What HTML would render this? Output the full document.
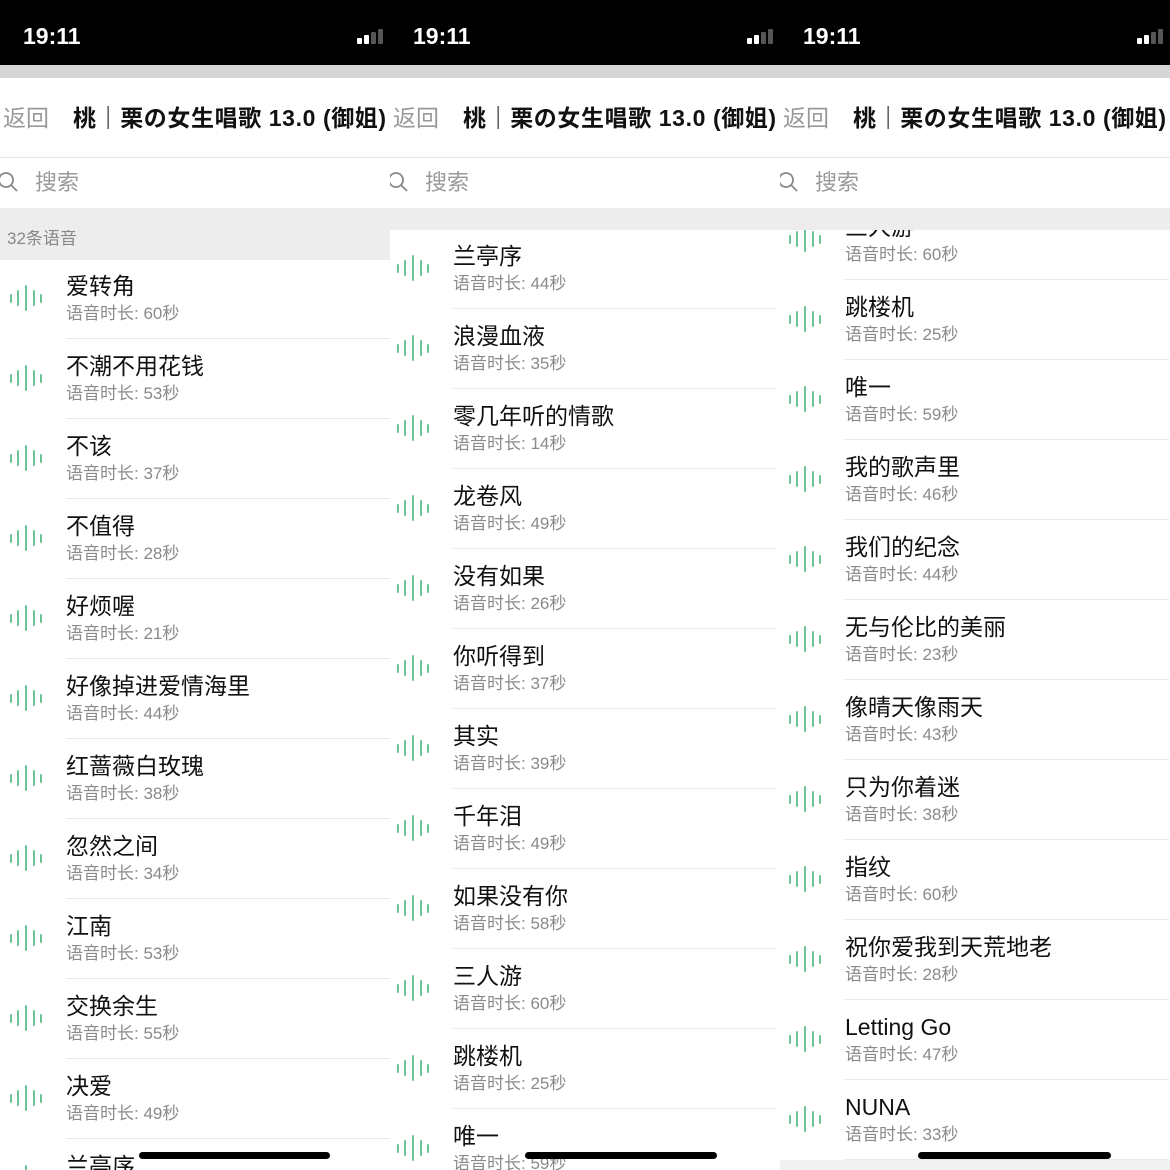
<!DOCTYPE html>
<html><head><meta charset="utf-8"><style>
*{margin:0;padding:0;box-sizing:border-box}
body{width:1170px;height:1170px;overflow:hidden;background:#fff;position:relative;font-family:"Liberation Sans","Noto Sans CJK SC",sans-serif}
.col{position:absolute;top:0;width:390px;height:1170px;overflow:hidden}
.sb{position:absolute;left:0;top:0;width:390px;height:65px;background:#000}
.time{position:absolute;left:23px;top:23px;color:#fff;font-size:23px;font-weight:bold;line-height:26px}
.sig{position:absolute;left:357px;top:30px;width:28px;height:14px}
.sig i{position:absolute;bottom:0;width:5px;background:#fff;border-radius:1px}
.gb{position:absolute;left:0;top:65px;width:390px;height:13px;background:#d6d6d6}
.nav{position:absolute;left:0;top:78px;width:390px;height:80px;background:#fff;border-bottom:1px solid #e6e6e6;white-space:nowrap}
.back{position:absolute;left:3px;top:26px;font-size:23px;color:#999;line-height:28px}
.ttl{position:absolute;left:73px;top:26px;font-size:23px;font-weight:bold;color:#111;line-height:28px;letter-spacing:0.6px}
.search{position:absolute;left:0;top:158px;width:390px;height:50px;background:#fff}
.search span{position:absolute;left:35px;top:11px;font-size:22px;color:#999;line-height:28px}
.g2{position:absolute;left:0;top:208px;width:390px;height:22px;background:#ededed}
.list{position:absolute;left:0;top:230px;width:390px;height:940px;overflow:hidden}
.row{position:absolute;left:0;width:390px;height:80px}
.row .t{position:absolute;left:66px;top:13px;font-size:23px;color:#111;white-space:nowrap;line-height:26px}
.row .s{position:absolute;left:66px;top:44px;font-size:17px;color:#8a8a8a;white-space:nowrap;line-height:20px}
.row .sep{position:absolute;left:66px;right:0;top:78px;height:1px;background:#e8e8e8}
.ic{position:absolute;left:9px;top:25px;width:34px;height:26px}
.ic i{position:absolute;width:2.4px;background:#6cc495;border-radius:1px}
.hb{position:absolute;top:1152px;height:7px;background:#000;border-radius:4px}
</style></head><body>
<div id="c1" class="col" style="left:0"></div>
<div id="c2" class="col" style="left:390px"></div>
<div id="c3" class="col" style="left:780px"></div>
<div class="hb" style="left:139px;width:191px"></div>
<div class="hb" style="left:525px;width:192px"></div>
<div class="hb" style="left:918px;width:193px"></div>
<script>
const data=[
{top:260,dx:0,hdr:true,items:[["爱转角",60],["不潮不用花钱",53],["不该",37],["不值得",28],["好烦喔",21],["好像掉进爱情海里",44],["红蔷薇白玫瑰",38],["忽然之间",34],["江南",53],["交换余生",55],["决爱",49],["兰亭序",44]]},
{top:230,dx:-3,items:[["兰亭序",44],["浪漫血液",35],["零几年听的情歌",14],["龙卷风",49],["没有如果",26],["你听得到",37],["其实",39],["千年泪",49],["如果没有你",58],["三人游",60],["跳楼机",25],["唯一",59]]},
{top:201,dx:-1,items:[["三人游",60],["跳楼机",25],["唯一",59],["我的歌声里",46],["我们的纪念",44],["无与伦比的美丽",23],["像晴天像雨天",43],["只为你着迷",38],["指纹",60],["祝你爱我到天荒地老",28],["Letting Go",47],["NUNA",33]]}];
const ic='<div class="ic"><i style="left:1px;top:8.5px;height:9px"></i><i style="left:8px;top:5px;height:16px"></i><i style="left:16px;top:0;height:26px"></i><i style="left:24px;top:5px;height:16px"></i><i style="left:31px;top:8.5px;height:9px"></i></div>';
data.forEach((d,k)=>{
 let h='<div class="sb"><div class="time">19:11</div><div class="sig"><i style="left:0;height:6px"></i><i style="left:7px;height:9px"></i><i style="left:14px;height:12px;background:#555"></i><i style="left:21px;height:15px;background:#555"></i></div></div><div class="gb"></div>';
 h+='<div class="nav"><div class="back">返回</div><div class="ttl">桃｜栗の女生唱歌 13.0 (御姐)</div></div>';
 h+='<div class="search"><svg style="position:absolute;left:-3px;top:13px" width="22" height="22" viewBox="0 0 22 22"><circle cx="9" cy="9" r="7" fill="none" stroke="#888" stroke-width="1.8"/><line x1="14" y1="14" x2="20" y2="20" stroke="#888" stroke-width="1.8"/></svg><span>搜索</span></div><div class="g2"></div>';
 h+='<div class="list">';
 if(d.hdr)h+='<div style="position:absolute;left:0;top:0;width:390px;height:30px;background:#ededed;color:#888;font-size:17px;padding-left:7px;line-height:18px">32条语音</div>';
 d.items.forEach((it,i)=>{
  const y=d.top-230+i*80;
  h+=`<div class="row" style="top:${y}px;left:${d.dx}px">${ic}<div class="t">${it[0]}</div><div class="s">语音时长: ${it[1]}秒</div><div class="sep"></div></div>`;
 });
 h+='</div>';
 if(k==2)h+='<div style="position:absolute;left:0;top:1160px;width:390px;height:10px;background:#f0f0f0"></div>';
 document.getElementById('c'+(k+1)).innerHTML=h;
});
</script>
</body></html>
